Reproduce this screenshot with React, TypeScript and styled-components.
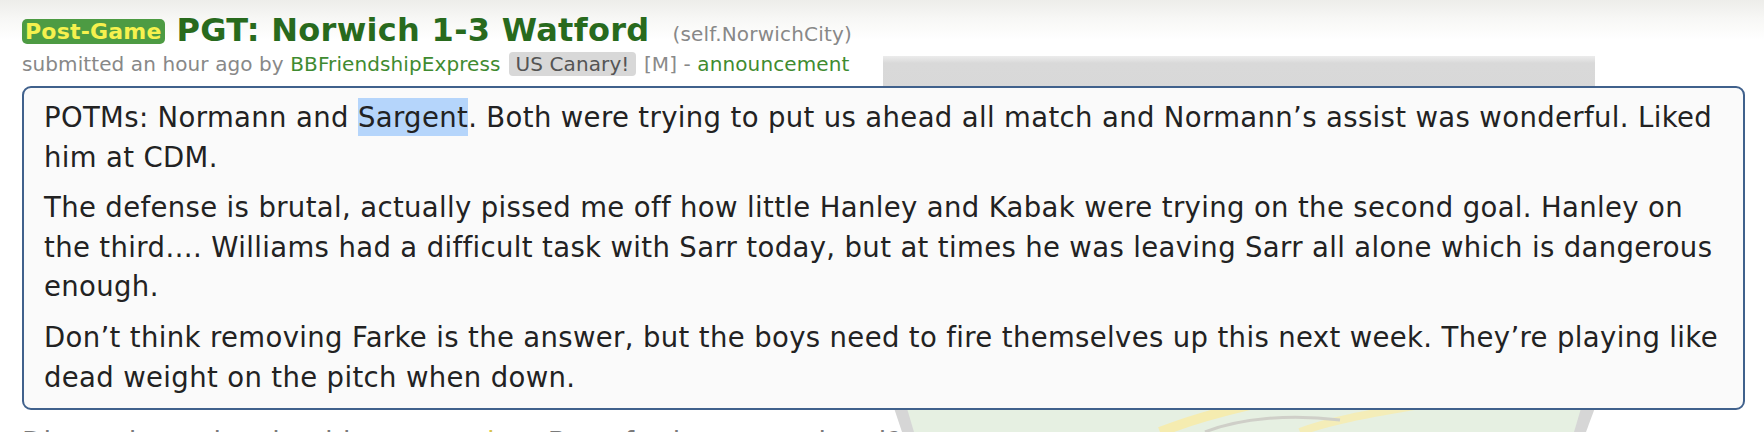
import React from "react";
import styled, { createGlobalStyle } from "styled-components";

const Global = createGlobalStyle`
  html, body {
    margin: 0;
    padding: 0;
    height: 432px;
    overflow: hidden;
  }
  body {
    background: linear-gradient(#ededea 0px, #f7f7f5 18px, #ffffff 40px);
    font-family: "DejaVu Sans", Verdana, sans-serif;
  }
`;

const Page = styled.div`
  position: relative;
  padding: 11px 19px 0 22px;
`;

const Watermark = styled.svg`
  position: absolute;
  left: 0;
  top: 0;
  width: 1764px;
  height: 432px;
  z-index: 0;
  pointer-events: none;
`;

const Content = styled.div`
  position: relative;
  z-index: 1;
`;

const TitleRow = styled.div`
  line-height: 38px;
  white-space: nowrap;
`;

const LinkFlair = styled.span`
  display: inline-block;
  background: #4d9b43;
  color: #f6f14e;
  font-weight: bold;
  font-size: 22px;
  letter-spacing: 0.2px;
  line-height: 25px;
  padding: 0 3px;
  border-radius: 5px;
  margin-right: 12px;
  vertical-align: 2px;
`;

const Title = styled.span`
  font-size: 32px;
  font-weight: bold;
  letter-spacing: 0.3px;
  color: #286a1d;
  margin-right: 23px;
`;

const Domain = styled.span`
  font-size: 20px;
  letter-spacing: 0.2px;
  color: #888888;
`;

const Meta = styled.div`
  margin-top: -3px;
  font-size: 20px;
  letter-spacing: 0.1px;
  line-height: 24px;
  color: #888888;
  white-space: nowrap;
`;

const Author = styled.span`
  color: #3f8b31;
`;

const UserFlair = styled.span`
  display: inline-block;
  background: #d8d8d8;
  color: #545454;
  padding: 0 7px;
  margin: 0 1px 0 8px;
  border-radius: 4px;
  line-height: 24px;
`;

const Mod = styled.span`
  color: #8a8a8a;
`;

const Green = styled.span`
  color: #3f8b31;
`;

const Body = styled.div`
  margin-top: 10px;
  border: 2px solid #40618c;
  border-radius: 9px;
  background: #fafafa;
  padding: 10px 20px 11px;
  color: #222222;
`;

const Para = styled.p`
  margin: 0 0 11px;
  font-size: 27.5px;
  letter-spacing: 0.36px;
  line-height: 39.6px;
  white-space: nowrap;
  &:last-child {
    margin-bottom: 0;
  }
`;

const Selected = styled.span`
  background: #b5d5fb;
  padding: 3px 0;
`;

const NextLine = styled.div`
  margin-top: 13px;
  font-size: 27.5px;
  letter-spacing: 0.36px;
  line-height: 39px;
  color: #7a7a7a;
  white-space: nowrap;
`;

const Yellow = styled.span`
  color: #d9c44a;
`;

export default function App() {
  return (
    <>
      <Global />
      <Page>
        <Watermark viewBox="0 0 1764 432">
          <defs>
            <linearGradient id="bar" x1="0" y1="0" x2="0" y2="1">
              <stop offset="0" stopColor="#ececec" />
              <stop offset="0.2" stopColor="#d9d9d9" />
              <stop offset="1" stopColor="#d8d8d8" />
            </linearGradient>
          </defs>
          <rect x="883" y="56" width="712" height="36" fill="url(#bar)" />
          <path d="M900 405 L912 432 L1578 432 L1590 405 Z" fill="#e6f0e2" />
          <path d="M893 405 L902 432 L914 432 L906 405 Z" fill="#d6d6d6" />
          <path d="M1582 405 L1574 432 L1586 432 L1596 405 Z" fill="#d6d6d6" />
          <path d="M1160 432 C1190 420 1220 412 1250 405" stroke="#f5ecb0" strokeWidth="10" fill="none" />
          <path d="M1300 432 C1330 420 1380 412 1420 405" stroke="#f4edb8" strokeWidth="8" fill="none" />
          <path d="M1205 432 C1240 418 1290 414 1340 420" stroke="#cfcfc8" strokeWidth="3" fill="none" />
        </Watermark>
        <Content>
          <TitleRow>
            <LinkFlair>Post-Game</LinkFlair>
            <Title>PGT: Norwich 1-3 Watford</Title>
            <Domain>(self.NorwichCity)</Domain>
          </TitleRow>
          <Meta>
            submitted an hour ago by <Author>BBFriendshipExpress</Author>
            <UserFlair>US Canary!</UserFlair> <Mod>[M]</Mod> - <Green>announcement</Green>
          </Meta>
          <Body>
            <Para>
              POTMs: Normann and <Selected>Sargent</Selected>. Both were trying to put us ahead all match and
              Normann’s assist was wonderful. Liked
              <br />
              him at CDM.
            </Para>
            <Para>
              The defense is brutal, actually pissed me off how little Hanley and Kabak were trying on the second
              goal. Hanley on
              <br />
              the third…. Williams had a difficult task with Sarr today, but at times he was leaving Sarr all alone
              which is dangerous
              <br />
              enough.
            </Para>
            <Para>
              Don’t think removing Farke is the answer, but the boys need to fire themselves up this next week.
              They’re playing like
              <br />
              dead weight on the pitch when down.
            </Para>
          </Body>
          <NextLine>
            Discussion: who should start <Yellow>against</Yellow> Brentford next weekend?
          </NextLine>
        </Content>
      </Page>
    </>
  );
}
